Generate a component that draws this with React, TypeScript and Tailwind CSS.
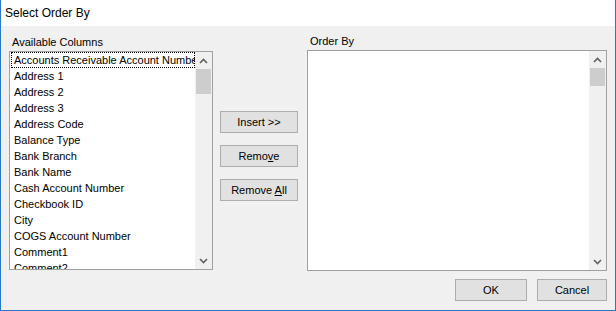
const columns = [
  "Accounts Receivable Account Number",
  "Address 1",
  "Address 2",
  "Address 3",
  "Address Code",
  "Balance Type",
  "Bank Branch",
  "Bank Name",
  "Cash Account Number",
  "Checkbook ID",
  "City",
  "COGS Account Number",
  "Comment1",
  "Comment2",
];

function Chevron({ down }: { down?: boolean }) {
  return (
    <svg width="9" height="6" viewBox="0 0 9 6" className="block">
      <path
        d={down ? "M1 1 L4.5 4.5 L8 1" : "M1 5 L4.5 1.5 L8 5"}
        fill="none"
        stroke="#606060"
        strokeWidth="1.6"
      />
    </svg>
  );
}

function ScrollBar({ thumb }: { thumb: number }) {
  return (
    <div className="flex h-full w-[17px] shrink-0 flex-col bg-[#f0f0f0]">
      <div className="flex h-[17px] items-center justify-center">
        <Chevron />
      </div>
      <div className="flex-1 px-[1px]">
        <div className="bg-[#cdcdcd]" style={{ height: thumb }} />
      </div>
      <div className="flex h-[17px] items-center justify-center">
        <Chevron down />
      </div>
    </div>
  );
}

function Button({ children, w }: { children: React.ReactNode; w: string }) {
  return (
    <button
      className={`${w} flex h-[22px] items-center justify-center border border-[#adadad] bg-[#e1e1e1] text-[11px] text-black`}
    >
      {children}
    </button>
  );
}

export default function App() {
  return (
    <div
      className="flex h-[311px] w-[616px] flex-col overflow-hidden border-x border-b border-[#2b79c2] bg-[#f0f0f0] text-black"
      style={{ fontFamily: '"Liberation Sans", Arial, sans-serif' }}
    >
      <div className="flex h-[26px] shrink-0 items-center bg-white pl-[4px] text-[12px]">
        Select Order By
      </div>

      <div className="flex flex-1 px-[8px]">
        {/* available columns */}
        <div className="flex w-[204px] flex-col">
          <div className="flex h-[25px] items-end pb-[2px] pl-[3px] text-[11px] leading-[13px]">
            Available Columns
          </div>
          <div className="flex h-[219px] border border-[#a0a0a0] bg-white">
            <div className="flex-1 overflow-hidden pl-[1px]">
              {columns.map((c, i) => (
                <div
                  key={c}
                  className={`h-[16px] whitespace-nowrap pl-[2px] text-[11px] leading-[15px] ${
                    i === 0 ? "border border-dotted border-black" : "border border-transparent"
                  }`}
                >
                  {c}
                </div>
              ))}
            </div>
            <ScrollBar thumb={25} />
          </div>
        </div>

        {/* middle buttons */}
        <div className="ml-[7px] flex flex-col gap-[12px] pt-[85px]">
          <Button w="w-[78px]">Insert &gt;&gt;</Button>
          <Button w="w-[78px]">
            <span>
              Remo<u>v</u>e
            </span>
          </Button>
          <Button w="w-[78px]">
            <span>
              Remove <u>A</u>ll
            </span>
          </Button>
        </div>

        {/* order by */}
        <div className="ml-[9px] flex flex-col">
          <div className="flex h-[24px] items-end pb-[2px] pl-[3px] text-[11px] leading-[13px]">
            Order By
          </div>
          <div className="flex h-[221px] w-[300px] border border-[#a0a0a0] bg-white">
            <div className="flex-1" />
            <ScrollBar thumb={18} />
          </div>
          <div className="mt-[8px] flex justify-end gap-[10px]">
            <Button w="w-[72px]">OK</Button>
            <Button w="w-[70px]">Cancel</Button>
          </div>
        </div>
      </div>
    </div>
  );
}
